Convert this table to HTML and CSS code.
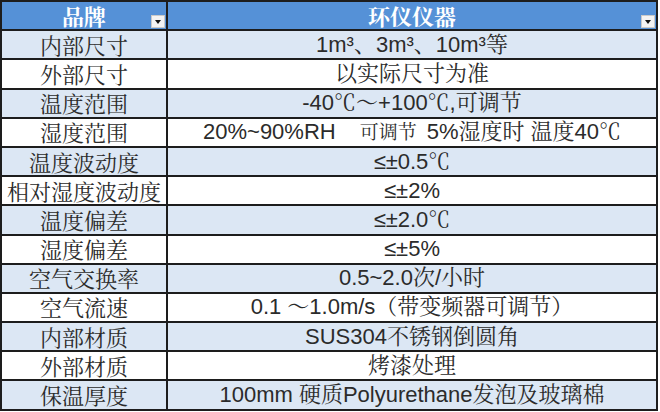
FILE: index.html
```html
<!DOCTYPE html>
<html lang="zh">
<head>
<meta charset="utf-8">
<title>环仪仪器</title>
<link rel="stylesheet" href="styles.css">
</head>
<body>
<table class="spec">
  <thead>
    <tr>
      <th class="label-col">品牌<span class="filter"></span></th>
      <th>环仪仪器<span class="filter"></span></th>
    </tr>
  </thead>
  <tbody>
    <tr class="alt"><td class="label">内部尺寸</td><td class="value">1m³、3m³、10m³等</td></tr>
    <tr><td class="label">外部尺寸</td><td class="value">以实际尺寸为准</td></tr>
    <tr class="alt"><td class="label">温度范围</td><td class="value">-40℃～+100℃,可调节</td></tr>
    <tr><td class="label">湿度范围</td><td class="value">20%~90%RH<span class="small gap-l">可调节</span><span class="gap-m">5%湿度时</span><span class="gap-s">温度40℃</span></td></tr>
    <tr class="alt"><td class="label">温度波动度</td><td class="value">≤±0.5℃</td></tr>
    <tr><td class="label">相对湿度波动度</td><td class="value">≤±2%</td></tr>
    <tr class="alt"><td class="label">温度偏差</td><td class="value">≤±2.0℃</td></tr>
    <tr><td class="label">湿度偏差</td><td class="value">≤±5%</td></tr>
    <tr class="alt"><td class="label">空气交换率</td><td class="value">0.5~2.0次/小时</td></tr>
    <tr><td class="label">空气流速</td><td class="value">0.1 ～1.0m/s（带变频器可调节）</td></tr>
    <tr class="alt"><td class="label">内部材质</td><td class="value">SUS304不锈钢倒圆角</td></tr>
    <tr><td class="label">外部材质</td><td class="value">烤漆处理</td></tr>
    <tr class="alt"><td class="label">保温厚度</td><td class="value">100mm 硬质Polyurethane发泡及玻璃棉</td></tr>
  </tbody>
</table>
</body>
</html>
```
FILE: styles.css
```css
html, body {
  margin: 0;
  padding: 0;
  background: #ffffff;
}

.spec {
  border-collapse: separate;
  border-spacing: 2px;
  background: #1d1d1d;
  width: 658px;
  table-layout: fixed;
}

.spec th,
.spec td {
  height: 27.2px;
  padding: 0;
  text-align: center;
  vertical-align: middle;
  white-space: nowrap;
  line-height: 26px;
}

.spec th {
  position: relative;
  background: #5591d7;
  color: #ffffff;
  font-family: "Noto Serif CJK SC", "Noto Sans CJK SC", serif;
  font-weight: bold;
  font-size: 22px;
}

.label-col {
  width: 164px;
}

.filter {
  position: absolute;
  right: 1px;
  bottom: 1px;
  width: 14px;
  height: 13px;
  box-sizing: border-box;
  background: #f3f3f3;
  border: 1px solid #c9c9c9;
}

.filter::after {
  content: "";
  position: absolute;
  left: 3px;
  top: 4px;
  border-left: 3px solid transparent;
  border-right: 3px solid transparent;
  border-top: 4px solid #111;
}

.spec td {
  background: #ffffff;
  color: #2b2b2b;
}

.spec tr.alt td {
  background: #dce7f4;
}

.label {
  font-family: "Noto Serif CJK SC", "Noto Sans CJK SC", serif;
  font-size: 22px;
}

.value {
  font-family: "Liberation Sans", "Noto Serif CJK SC", "Noto Sans CJK SC", sans-serif;
  font-size: 22px;
}

.small {
  font-size: 19px;
}

.gap-l {
  margin-left: 24px;
}

.gap-m {
  margin-left: 10px;
}

.gap-s {
  margin-left: 6px;
}
```
